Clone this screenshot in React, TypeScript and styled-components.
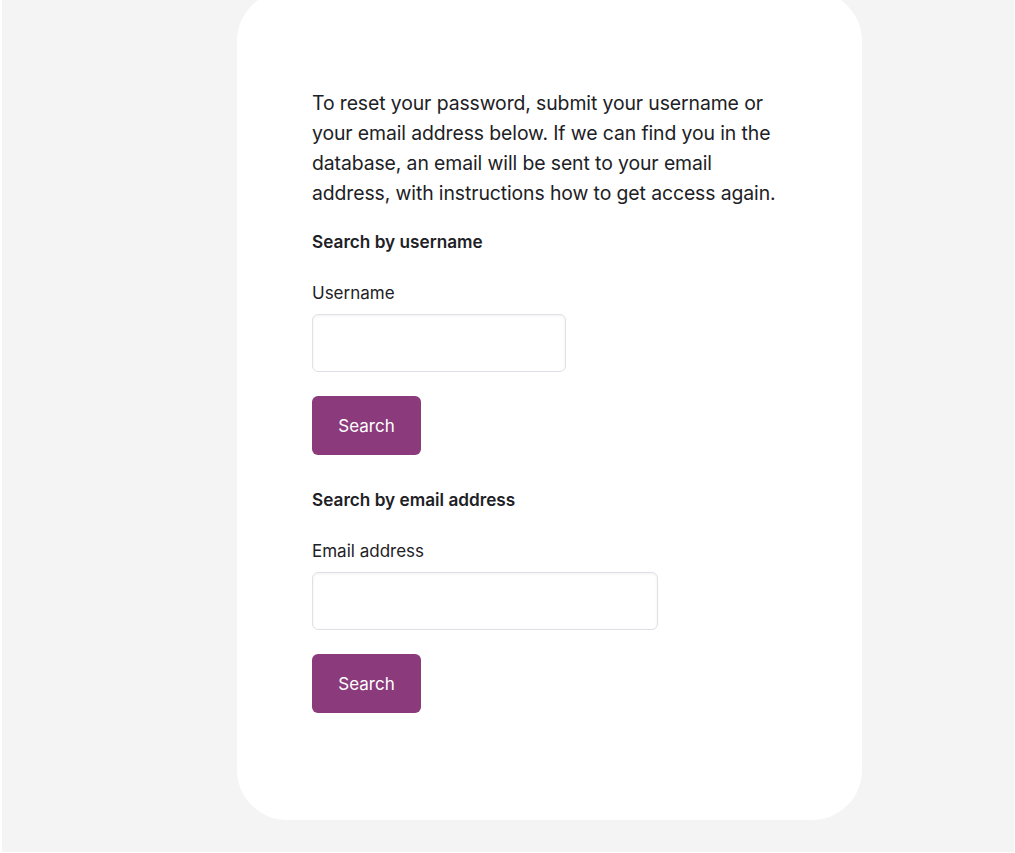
import styled, { createGlobalStyle } from 'styled-components'

const Global = createGlobalStyle`
html, body {
  margin: 0;
  padding: 0;
  background: #ffffff;
}
body {
  font-family: Inter, "Noto Sans", "Liberation Sans", sans-serif;
  color: #1d2125;
}
`

const Page = styled.div`
margin: 0 1px 1px 2px;
height: 852px;
background: #f4f4f4;
overflow: hidden;
padding-left: 235px;
box-sizing: border-box;
`

const Card = styled.div`
width: 625px;
height: 829px;
margin-top: -9px;
background: #ffffff;
border-radius: 50px;
box-sizing: border-box;
padding: 97px 75px 0 75px;
display: flex;
flex-direction: column;
align-items: flex-start;
`

const Intro = styled.p`
margin: 0;
font-size: 19.4px;
line-height: 30px;
letter-spacing: -0.1px;
width: 475px;
`

const Heading = styled.h3<{ gap: number }>`
margin: ${(p) => p.gap}px 0 0 0;
font-size: 17.2px;
line-height: 24px;
font-weight: 600;
`

const Label = styled.label`
margin-top: 27px;
font-size: 17px;
line-height: 24px;
`

const Input = styled.input<{ w: number }>`
margin-top: 9px;
width: ${(p) => p.w}px;
height: 58px;
box-sizing: border-box;
border: 1px solid #dee2e6;
border-radius: 6px;
box-shadow: inset 0 1px 3px rgba(0, 0, 0, 0.06);
background: #ffffff;
outline: none;
`

const Button = styled.button`
margin-top: 24px;
width: 109px;
height: 59px;
border: none;
border-radius: 6px;
background: #8b3b7b;
color: #ffffff;
font-family: inherit;
font-size: 17px;
cursor: pointer;
`

const App = () => {
  return (
    <>
      <Global />
      <Page>
        <Card>
          <Intro>
            To reset your password, submit your username or your email address below. If we can
            find you in the database, an email will be sent to your email address, with
            instructions how to get access again.
          </Intro>

          <Heading gap={22}>Search by username</Heading>
          <Label>Username</Label>
          <Input w={254} />
          <Button>Search</Button>

          <Heading gap={33}>Search by email address</Heading>
          <Label>Email address</Label>
          <Input w={346} />
          <Button>Search</Button>
        </Card>
      </Page>
    </>
  )
}

export default App
